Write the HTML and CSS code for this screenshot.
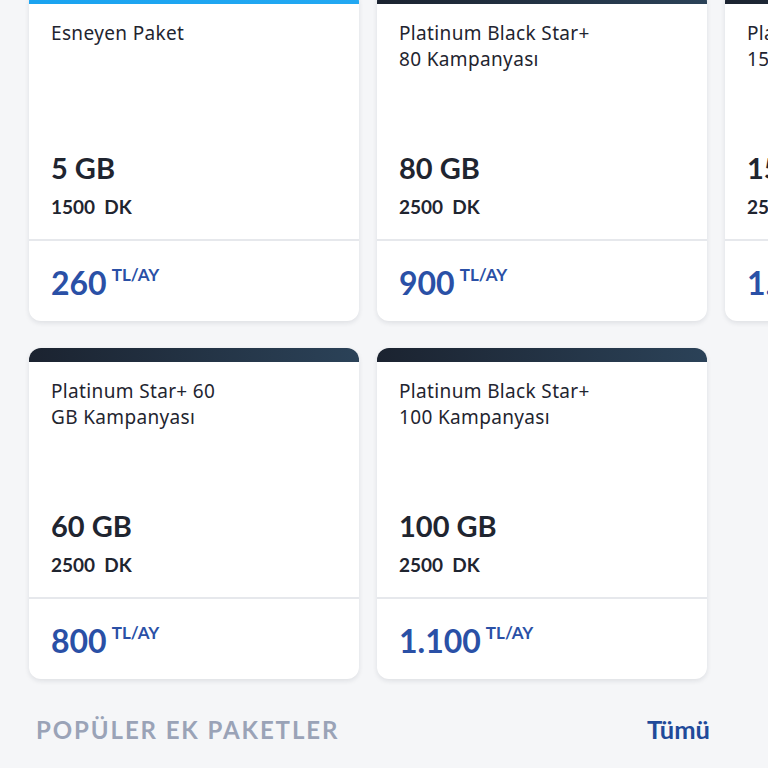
FILE: index.html
```html
<!DOCTYPE html>
<html lang="tr">
<head>
<meta charset="UTF-8">
<meta name="viewport" content="width=device-width, initial-scale=1.0">
<title>Paketler</title>
<link rel="stylesheet" href="styles.css">
</head>
<body>
<div class="page">
  <div class="row first">
    <div class="card">
      <div class="bar blue"></div>
      <div class="info">
        <div class="name">Esneyen Paket</div>
        <div class="data">
          <div class="gb">5 GB</div>
          <div class="dk">1500&nbsp; DK</div>
        </div>
      </div>
      <div class="price"><span class="amount">260</span><span class="unit">TL/AY</span></div>
    </div>
    <div class="card">
      <div class="bar dark"></div>
      <div class="info">
        <div class="name">Platinum Black Star+<br>80 Kampanyası</div>
        <div class="data">
          <div class="gb">80 GB</div>
          <div class="dk">2500&nbsp; DK</div>
        </div>
      </div>
      <div class="price"><span class="amount">900</span><span class="unit">TL/AY</span></div>
    </div>
    <div class="card">
      <div class="bar dark"></div>
      <div class="info">
        <div class="name">Platinum Black Star+<br>150 Kampanyası</div>
        <div class="data">
          <div class="gb">150 GB</div>
          <div class="dk">2500&nbsp; DK</div>
        </div>
      </div>
      <div class="price"><span class="amount">1.400</span><span class="unit">TL/AY</span></div>
    </div>
  </div>
  <div class="row">
    <div class="card">
      <div class="bar dark"></div>
      <div class="info">
        <div class="name">Platinum Star+ 60<br>GB Kampanyası</div>
        <div class="data">
          <div class="gb">60 GB</div>
          <div class="dk">2500&nbsp; DK</div>
        </div>
      </div>
      <div class="price"><span class="amount">800</span><span class="unit">TL/AY</span></div>
    </div>
    <div class="card">
      <div class="bar dark"></div>
      <div class="info">
        <div class="name">Platinum Black Star+<br>100 Kampanyası</div>
        <div class="data">
          <div class="gb">100 GB</div>
          <div class="dk">2500&nbsp; DK</div>
        </div>
      </div>
      <div class="price"><span class="amount">1.100</span><span class="unit">TL/AY</span></div>
    </div>
  </div>
  <div class="section">
    <h2>POPÜLER EK PAKETLER</h2>
    <a href="#" class="all">Tümü</a>
  </div>
</div>
</body>
</html>
```

FILE: styles.css
```css
:root {
  --bg: #f5f6f8;
  --text: #1f2530;
  --blue: #2a50a6;
  --line: #e6e8ec;
  --radius: 12px;
}
body { margin: 0; background: var(--bg); color: var(--text); font-family: 'Lato', sans-serif; }
.page { width: 768px; height: 768px; overflow: hidden; }
.row { display: flex; gap: 18px; padding: 0 29px; margin-bottom: 27px; }
.row.first { margin-top: -10px; }
.card {
  flex: 0 0 330px; background: #fff; border-radius: var(--radius); overflow: hidden;
  box-shadow: 0 2px 5px rgba(20,30,50,0.10); display: flex; flex-direction: column;
}
.bar { height: 14px; }
.bar.blue { background: linear-gradient(90deg, #1aa3f0, #22a8f2); }
.bar.dark { background: linear-gradient(90deg, #1b2330, #2b4258); }
.info {
  height: 237px; box-sizing: border-box; padding: 16px 22px 21px; border-bottom: 2px solid var(--line);
  display: flex; flex-direction: column; justify-content: space-between;
}
.name { font-family: 'Noto Sans', sans-serif; font-size: 19px; line-height: 26px; letter-spacing: 0.35px; }
.gb { font-size: 29px; font-weight: 700; line-height: 34px; margin-bottom: 11px; }
.dk { font-size: 19px; font-weight: 700; line-height: 22px; }
.price { height: 80px; box-sizing: border-box; padding: 24px 22px 0; color: var(--blue); font-weight: 700; display: flex; align-items: flex-start; }
.amount { font-size: 32px; line-height: 36px; }
.unit { font-size: 17px; line-height: 20px; margin-left: 5px; }
.section { display: flex; justify-content: space-between; align-items: center; padding: 8px 58px 0 36px; }
.section h2 { margin: 0; font-size: 24px; font-weight: 700; letter-spacing: 1.9px; color: #9aa3b7; }
.all { font-size: 25.5px; font-weight: 700; color: #1f4a9a; text-decoration: none; }
```
